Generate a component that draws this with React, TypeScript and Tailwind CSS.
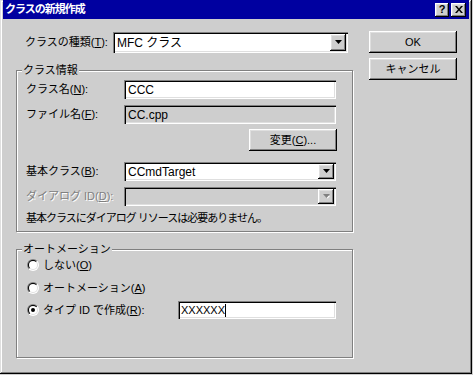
import React from 'react';

const face = 'bg-[#cecece]';
const sunken =
  'shadow-[inset_1px_1px_#808080,inset_2px_2px_#000,inset_-1px_-1px_#fff,inset_-2px_-2px_#dfdfdf]';
const raised =
  'shadow-[inset_-1px_-1px_#000,inset_1px_1px_#fff,inset_-2px_-2px_#808080,inset_2px_2px_#dfdfdf]';
const etched = 'border border-[#808080] shadow-[inset_1px_1px_#fff,1px_1px_#fff]';

function DropButton({ disabled = false, h }: { disabled?: boolean; h: string }) {
  return (
    <div className={`w-[16px] ${h} ${face} ${raised} flex items-center justify-center`}>
      <svg width="7" height="5" viewBox="0 0 7 5">
        {disabled && <path d="M2 2h5L4.5 4.5z" fill="#fff" />}
        <path d="M0 0h7L3.5 4z" fill={disabled ? '#808080' : '#000'} />
      </svg>
    </div>
  );
}

function Radio({ checked = false }: { checked?: boolean }) {
  return (
    <svg width="12" height="12" viewBox="0 0 12 12">
      <defs>
        <linearGradient id="ro" x1="0" y1="0" x2="1" y2="1">
          <stop offset="0.5" stopColor="#808080" />
          <stop offset="0.5" stopColor="#fff" />
        </linearGradient>
        <linearGradient id="ri" x1="0" y1="0" x2="1" y2="1">
          <stop offset="0.5" stopColor="#000" />
          <stop offset="0.5" stopColor="#dfdfdf" />
        </linearGradient>
      </defs>
      <circle cx="6" cy="6" r="6" fill="url(#ro)" />
      <circle cx="6" cy="6" r="5" fill="url(#ri)" />
      <circle cx="6" cy="6" r="4" fill="#fff" />
      {checked && <circle cx="6" cy="6" r="2" fill="#000" />}
    </svg>
  );
}

function Button({ children, h = 'h-[22px]' }: { children: React.ReactNode; h?: string }) {
  return (
    <div className={`w-[88px] ${h} ${raised} ${face} flex items-center justify-center text-[11px] text-black`}>
      {children}
    </div>
  );
}

function Group({ label, children, h }: { label: string; children: React.ReactNode; h: string }) {
  return (
    <div className={`relative ml-[13px] w-[337px] ${h} ${etched}`}>
      <span className={`absolute -top-[8px] left-[5px] px-[1px] ${face} text-[11px] leading-[14px]`}>{label}</span>
      {children}
    </div>
  );
}

export default function App() {
  return (
    <div className={`w-[473px] h-[375px] ${face} font-['Liberation_Sans','Noto_Sans_CJK_JP',sans-serif] text-black`}>
      <div className={`w-[472px] h-[374px] px-[3px] pb-[3px] flex flex-col ${face} shadow-[inset_-1px_-1px_#000,inset_1px_1px_#dfdfdf,inset_-2px_-2px_#808080,inset_2px_2px_#fff]`}>
        {/* title bar */}
        <div className="h-[19px] bg-[#0000a0] flex items-center pl-[2px] pr-[3px]">
          <span className="text-white font-bold text-[11px] leading-none tracking-[-1px] flex-1">クラスの新規作成</span>
          <div className={`w-[14px] h-[14px] ${face} ${raised} flex items-center justify-center text-[11px] font-bold leading-none`}>?</div>
          <div className={`ml-[2px] w-[15px] h-[14px] ${face} ${raised} flex items-center justify-center`}>
            <svg width="8" height="7" viewBox="0 0 8 7">
              <path d="M0 0h2l2 2.5L6 0h2L5 3.5 8 7H6L4 4.5 2 7H0l3-3.5z" fill="#000" />
            </svg>
          </div>
        </div>

        <div className="flex flex-1">
          {/* left column */}
          <div className="w-[350px] flex flex-col">
            <div className="mt-[13px] h-[21px] flex items-center">
              <span className="ml-[22px] w-[88px] text-[11px]">
                クラスの種類(<u>T</u>):
              </span>
              <div className={`w-[235px] h-[21px] bg-white ${sunken} flex items-center p-[2px]`}>
                <span className="flex-1 pl-[2px] text-[12px]">MFC クラス</span>
                <DropButton h="h-[17px]" />
              </div>
            </div>

            <div className="mt-[17px]">
              <Group label="クラス情報" h="h-[162px]">
                <div className="flex flex-col pl-[9px] pr-[15px]">
                  <div className="mt-[9px] h-[19px] flex items-center">
                    <span className="w-[98px] text-[11px]">クラス名(<u>N</u>):</span>
                    <div className={`w-[212px] h-[19px] bg-white ${sunken} flex items-center pl-[4px] text-[12px]`}>CCC</div>
                  </div>
                  <div className="mt-[6px] h-[19px] flex items-center">
                    <span className="w-[98px] text-[11px]">ファイル名(<u>F</u>):</span>
                    <div className={`w-[212px] h-[19px] ${face} ${sunken} flex items-center pl-[4px] text-[12px]`}>CC.cpp</div>
                  </div>
                  <div className="mt-[5px] flex justify-end">
                    <Button>
                      変更(<u>C</u>)...
                    </Button>
                  </div>
                  <div className="mt-[11px] h-[19px] flex items-center">
                    <span className="w-[98px] text-[11px]">基本クラス(<u>B</u>):</span>
                    <div className={`w-[212px] h-[19px] bg-white ${sunken} flex items-center p-[2px]`}>
                      <span className="flex-1 pl-[2px] text-[12px]">CCmdTarget</span>
                      <DropButton h="h-[15px]" />
                    </div>
                  </div>
                  <div className="mt-[6px] h-[19px] flex items-center">
                    <span className="w-[98px] text-[11px] text-[#808080] [text-shadow:1px_1px_0_#fff]">
                      ダイアログ ID(<u>D</u>):
                    </span>
                    <div className={`w-[212px] h-[19px] ${face} ${sunken} flex items-center p-[2px]`}>
                      <span className="flex-1" />
                      <DropButton h="h-[15px]" disabled />
                    </div>
                  </div>
                  <div className="mt-[6px] text-[11px] leading-[13px] tracking-[-1px]">
                    基本クラスにダイアログ リソースは必要ありません。
                  </div>
                </div>
              </Group>
            </div>

            <div className="mt-[17px]">
              <Group label="オートメーション" h="h-[109px]">
                <div className="flex flex-col pl-[10px]">
                  <div className="mt-[7px] h-[16px] flex items-center gap-[4px]">
                    <Radio />
                    <span className="text-[11px]">しない(<u>O</u>)</span>
                  </div>
                  <div className="mt-[7px] h-[16px] flex items-center gap-[4px]">
                    <Radio />
                    <span className="text-[11px]">オートメーション(<u>A</u>)</span>
                  </div>
                  <div className="mt-[5px] h-[18px] flex items-center gap-[4px]">
                    <Radio checked />
                    <span className="w-[131px] text-[11px]">タイプ ID で作成(<u>R</u>):</span>
                    <div className={`w-[158px] h-[18px] bg-white ${sunken} flex items-center pl-[3px] text-[11px]`}>
                      XXXXXX
                      <span className="w-[1px] h-[13px] bg-black" />
                    </div>
                  </div>
                </div>
              </Group>
            </div>
          </div>

          {/* right column */}
          <div className="ml-[16px] flex flex-col">
            <div className="mt-[12px]">
              <Button>OK</Button>
            </div>
            <div className="mt-[5px]">
              <Button>キャンセル</Button>
            </div>
          </div>
        </div>
      </div>
    </div>
  );
}
